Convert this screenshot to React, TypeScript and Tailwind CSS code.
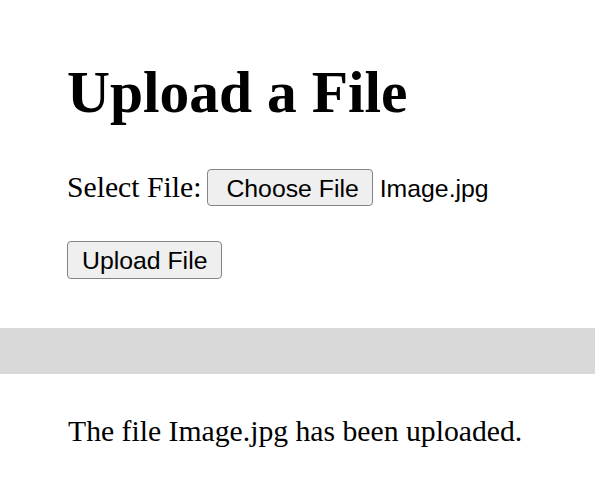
import React from 'react';

const serif = { fontFamily: '"Liberation Serif", "Times New Roman", serif' };

export default function App() {
  return (
    <div className="w-[595px] h-[498px] bg-white text-black overflow-hidden" style={serif}>
      <div className="pl-[67px] pt-[63px]">
        <h1 className="text-[59.5px] leading-none font-bold">Upload a File</h1>

        <div className="mt-[46px] flex items-baseline">
          <span className="text-[29.7px] leading-none">Select File:</span>
          <button className="ml-[6px] h-[37px] pl-[18px] pr-[13px] bg-[#efefef] border border-[#858585] rounded-[4px] text-[24.8px] font-['Liberation_Sans',Arial,sans-serif]">
            Choose File
          </button>
          <span className="ml-[7px] text-[24.8px] leading-none font-['Liberation_Sans',Arial,sans-serif]">Image.jpg</span>
        </div>

        <div className="mt-[35px]">
          <button className="h-[38px] px-[14px] bg-[#efefef] border border-[#858585] rounded-[4px] text-[24.8px] font-['Liberation_Sans',Arial,sans-serif]">
            Upload File
          </button>
        </div>
      </div>

      <div className="mt-[49px] h-[46px] bg-[#d9d9d9]" />

      <p className="pl-[68px] mt-[43px] text-[29.7px] leading-none">The file Image.jpg has been uploaded.</p>
    </div>
  );
}
